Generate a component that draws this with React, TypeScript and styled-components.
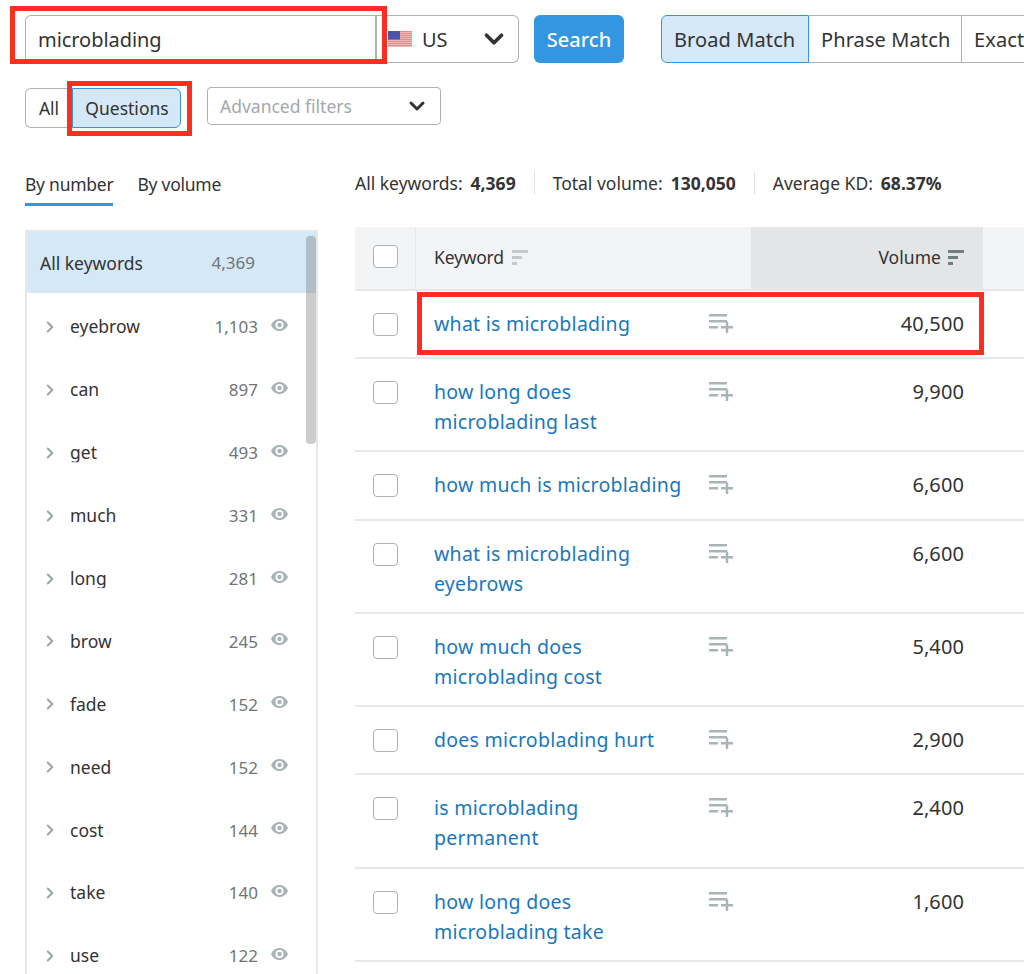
import React from 'react'
import styled, { createGlobalStyle } from 'styled-components'
import { ChevronDown, ChevronRight } from 'lucide-react'

const GlobalStyle = createGlobalStyle`
  html, body {
    margin: 0;
    padding: 0;
    background: #fff;
  }
  body {
    font-family: "Noto Sans", "Open Sans", sans-serif;
    color: #333;
  }
  * {
    box-sizing: border-box;
  }
`

const Page = styled.div`
  position: relative;
  width: 1024px;
  height: 974px;
  overflow: hidden;
  padding: 15px 0 0 25px;
`

const SearchRow = styled.div`
  display: flex;
  width: 1100px;
  height: 48px;
`

const QueryBox = styled.div`
  width: 352px;
  border: 1px solid #abb3b6;
  border-right: 2px solid #abb3b6;
  border-radius: 6px 0 0 6px;
  display: flex;
  align-items: center;
  padding-left: 12px;
  font-size: 20px;
  letter-spacing: -0.05px;
`

const CountrySelect = styled.div`
  width: 142px;
  border: 1px solid #abb3b6;
  border-left: 0;
  border-radius: 0 6px 6px 0;
  display: flex;
  align-items: center;
  padding-left: 11px;
  font-size: 20px;
  margin-right: 15px;

  svg.chevron {
    margin-left: auto;
    margin-right: 9px;
  }
`

const CountryName = styled.span`
  margin-left: 10px;
`

const SearchButton = styled.div`
  width: 90px;
  background: #3296e0;
  color: #fff;
  border-radius: 6px;
  display: flex;
  align-items: center;
  justify-content: center;
  font-size: 20px;
  font-weight: 500;
  margin-right: 37px;
`

const MatchTab = styled.div<{ $active?: boolean; $w: number }>`
  width: ${({ $w }) => $w}px;
  display: flex;
  align-items: center;
  padding-left: 12px;
  font-size: 20px;
  white-space: nowrap;
  letter-spacing: 0.1px;
  background: ${({ $active }) => ($active ? '#d5e8f7' : '#fff')};
  border: 1px solid ${({ $active }) => ($active ? '#3296e0' : '#abb3b6')};
  border-left-width: ${({ $active }) => ($active ? '1px' : '0')};
  border-radius: ${({ $active }) => ($active ? '6px 0 0 6px' : '0')};
`

const FilterRow = styled.div`
  display: flex;
  align-items: flex-start;
  margin-top: 24px;
  height: 41px;
`

const AllToggle = styled.div`
  width: 47px;
  height: 40px;
  margin-top: 1px;
  border: 1px solid #abb3b6;
  border-right: 0;
  border-radius: 6px 0 0 6px;
  display: flex;
  align-items: center;
  justify-content: center;
  font-size: 17.5px;
`

const QuestionsToggle = styled.div`
  width: 109px;
  height: 40px;
  margin-top: 1px;
  margin-right: 26px;
  padding-left: 1px;
  background: #d5e8f7;
  border: 1px solid #3296e0;
  border-radius: 0 6px 6px 0;
  display: flex;
  align-items: center;
  justify-content: center;
  font-size: 17.5px;
`

const FiltersSelect = styled.div`
  width: 234px;
  height: 38px;
  border: 1px solid #abb3b6;
  border-radius: 4px;
  display: flex;
  align-items: center;
  justify-content: space-between;
  padding: 0 11px 0 12px;
  font-size: 17.5px;
  color: #a3a8ab;
`

const Content = styled.div`
  display: flex;
  margin-top: 41px;
`

const LeftColumn = styled.div`
  width: 293px;
  margin-right: 37px;
  flex-shrink: 0;
`

const RightColumn = styled.div`
  width: 700px;
  flex-shrink: 0;
`

const ViewTabs = styled.div`
  display: flex;
  gap: 24px;
  height: 39px;
`

const ViewTab = styled.div<{ $active?: boolean }>`
  height: 37px;
  font-size: 17.5px;
  line-height: 30px;
  letter-spacing: -0.25px;
  border-bottom: 3px solid ${({ $active }) => ($active ? '#3296e0' : 'transparent')};
`

const Sidebar = styled.div`
  position: relative;
  margin-top: 22px;
  height: 760px;
  border: 2px solid #e6e9ea;
  border-bottom: 0;
`

const ScrollThumb = styled.div`
  position: absolute;
  top: 4px;
  right: 0;
  width: 10px;
  height: 208px;
  border-radius: 4px;
  background: rgba(120, 120, 120, 0.38);
`

const AllRow = styled.div`
  display: flex;
  align-items: center;
  height: 61px;
  background: #d5e8f7;
  padding-left: 13px;
  font-size: 17.5px;
`

const AllCount = styled.span`
  margin-left: auto;
  margin-right: 61px;
  font-size: 17px;
  color: #6f7578;
`

const GroupList = styled.div`
  padding-top: 2.5px;
`

const GroupRow = styled.div`
  display: flex;
  align-items: center;
  height: 62.9px;
  padding-left: 14px;
  font-size: 17px;
`

/* the descenders are cut off in the source too */
const GroupName = styled.span`
  display: block;
  margin-left: 11px;
  font-size: 17.5px;
  line-height: 19px;
  clip-path: inset(0);
`

const GroupCount = styled.span`
  margin-left: auto;
  margin-right: 13px;
  color: #6f7578;
`

const EyeIcon = styled.svg`
  margin-right: 28px;
  margin-top: -4px;
`

const StatsBar = styled.div`
  display: flex;
  align-items: center;
  height: 23px;
  font-size: 17.5px;
  margin-top: 2px;
`

const Stat = styled.div<{ $first?: boolean }>`
  display: flex;
  gap: 8px;
  align-items: center;
  height: 23px;
  padding: 0 18px;
  padding-left: ${({ $first }) => ($first ? '0' : '18px')};
  border-left: ${({ $first }) => ($first ? '0' : '1px solid #dfe2e3')};

  b {
    font-weight: 700;
  }
`

const Table = styled.div`
  margin-top: 33px;
`

const HeadRow = styled.div`
  display: flex;
  height: 64px;
  background: #f3f4f5;
  border-bottom: 2px solid #e6e9ea;
`

const CheckCell = styled.div<{ $head?: boolean }>`
  width: 61px;
  flex-shrink: 0;
  padding: ${({ $head }) => ($head ? '18px' : '22px')} 0 0 18px;
  border-right: ${({ $head }) => ($head ? '1px solid #e6e9ea' : '0')};
`

const Checkbox = styled.div`
  width: 25px;
  height: 23px;
  background: #fff;
  border: 1px solid #abb3b6;
  border-radius: 4px;
`

const KeywordHead = styled.div`
  width: 335px;
  display: flex;
  align-items: center;
  gap: 7px;
  padding: 0 0 2px 18px;
  font-size: 17.5px;
  letter-spacing: -0.2px;
`

const VolumeHead = styled.div`
  width: 232px;
  display: flex;
  align-items: center;
  justify-content: flex-end;
  gap: 6px;
  padding: 0 18px 2px 0;
  background: #e3e5e7;
  font-size: 17.5px;
  letter-spacing: 0.05px;
`

const Row = styled.div`
  display: flex;
  min-height: 68.2px;
  padding-bottom: 13.3px;
  border-bottom: 2px solid #e6e9ea;
`

const KeywordCell = styled.div`
  width: 335px;
  flex-shrink: 0;
  display: flex;
  padding: 18px 0 0 18px;
`

const KeywordLink = styled.a`
  width: 248px;
  font-size: 19.5px;
  line-height: 30px;
  letter-spacing: 0.26px;
  color: #1a77bd;
`

const AddIcon = styled.svg`
  margin-left: 26px;
  margin-top: 4px;
  flex-shrink: 0;
`

const VolumeCell = styled.div`
  width: 232px;
  flex-shrink: 0;
  padding: 18px 19px 0 0;
  text-align: right;
  font-size: 20px;
  line-height: 30px;
  letter-spacing: 0.1px;
`

const Callout = styled.div<{ $x: number; $y: number; $w: number; $h: number }>`
  position: absolute;
  left: ${({ $x }) => $x}px;
  top: ${({ $y }) => $y}px;
  width: ${({ $w }) => $w}px;
  height: ${({ $h }) => $h}px;
  border: 5px solid #ff2d20;
  pointer-events: none;
`

const FlagIcon = () => (
  <svg width="24" height="16" viewBox="0 0 24 16">
    <rect width="24" height="16" fill="#f4f4f6" />
    {[0, 1, 2, 3, 4, 5, 6, 7].map((i) => (
      <rect key={i} y={i * 2 + 0.3} width="24" height="1.1" fill="#ee5a5f" />
    ))}
    <rect width="12" height="8.5" fill="#4a55a8" />
  </svg>
)

const SortIcon = ({ color }: { color: string }) => (
  <svg width="18" height="16" viewBox="0 0 18 16">
    <rect x="1" y="1" width="16" height="3" fill={color} />
    <rect x="1" y="7" width="10" height="3" fill={color} />
    <rect x="1" y="13" width="5" height="3" fill={color} />
  </svg>
)

const groups: [string, string][] = [
  ['eyebrow', '1,103'],
  ['can', '897'],
  ['get', '493'],
  ['much', '331'],
  ['long', '281'],
  ['brow', '245'],
  ['fade', '152'],
  ['need', '152'],
  ['cost', '144'],
  ['take', '140'],
  ['use', '122'],
]

const rows: [string, string][] = [
  ['what is microblading', '40,500'],
  ['how long does microblading last', '9,900'],
  ['how much is microblading', '6,600'],
  ['what is microblading eyebrows', '6,600'],
  ['how much does microblading cost', '5,400'],
  ['does microblading hurt', '2,900'],
  ['is microblading permanent', '2,400'],
  ['how long does microblading take', '1,600'],
]

export default function App() {
  return (
    <Page>
      <GlobalStyle />
      <SearchRow>
        <QueryBox>microblading</QueryBox>
        <CountrySelect>
          <FlagIcon />
          <CountryName>US</CountryName>
          <ChevronDown className="chevron" size={30} strokeWidth={3} color="#333" />
        </CountrySelect>
        <SearchButton>Search</SearchButton>
        <MatchTab $active $w={148}>Broad Match</MatchTab>
        <MatchTab $w={153}>Phrase Match</MatchTab>
        <MatchTab $w={153}>Exact Match</MatchTab>
      </SearchRow>
      <FilterRow>
        <AllToggle>All</AllToggle>
        <QuestionsToggle>Questions</QuestionsToggle>
        <FiltersSelect>
          Advanced filters
          <ChevronDown size={24} strokeWidth={3} color="#333" />
        </FiltersSelect>
      </FilterRow>
      <Content>
        <LeftColumn>
          <ViewTabs>
            <ViewTab $active>By number</ViewTab>
            <ViewTab>By volume</ViewTab>
          </ViewTabs>
          <Sidebar>
            <ScrollThumb />
            <AllRow>
              All keywords
              <AllCount>4,369</AllCount>
            </AllRow>
            <GroupList>
              {groups.map(([name, count]) => (
                <GroupRow key={name}>
                  <ChevronRight size={18} strokeWidth={2.5} color="#9aa3a6" />
                  <GroupName>{name}</GroupName>
                  <GroupCount>{count}</GroupCount>
                  <EyeIcon width="17" height="12" viewBox="0 0 17 12">
                    <path
                      d="M8.5 0C4.6 0 1.6 2.4 0 6c1.6 3.6 4.6 6 8.5 6s6.900-2.400 8.500-6C15.400 2.400 12.400 0 8.500 0zm0 10a4 4 0 1 1 0-8 4 4 0 0 1 0 8zm0-6.200a2.200 2.200 0 1 0 0 4.400 2.200 2.200 0 0 0 0-4.400z"
                      fill="#aab3b6"
                      fillRule="evenodd"
                    />
                  </EyeIcon>
                </GroupRow>
              ))}
            </GroupList>
          </Sidebar>
        </LeftColumn>
        <RightColumn>
          <StatsBar>
            <Stat $first>All keywords: <b>4,369</b></Stat>
            <Stat>Total volume: <b>130,050</b></Stat>
            <Stat>Average KD: <b>68.37%</b></Stat>
          </StatsBar>
          <Table>
            <HeadRow>
              <CheckCell $head><Checkbox /></CheckCell>
              <KeywordHead>Keyword <SortIcon color="#c3c8ca" /></KeywordHead>
              <VolumeHead>Volume <SortIcon color="#6f7d82" /></VolumeHead>
            </HeadRow>
            {rows.map(([keyword, volume]) => (
              <Row key={keyword}>
                <CheckCell><Checkbox /></CheckCell>
                <KeywordCell>
                  <KeywordLink>{keyword}</KeywordLink>
                  <AddIcon width="26" height="20" viewBox="0 0 26 20">
                    <g fill="#aab3b6">
                      <rect x="1" y="1" width="18" height="2.500" />
                      <rect x="1" y="7" width="18" height="2.500" />
                      <rect x="1" y="13" width="9" height="2.500" />
                      <rect x="13" y="13" width="12" height="2.500" />
                      <rect x="17.750" y="8.500" width="2.500" height="11.500" />
                    </g>
                  </AddIcon>
                </KeywordCell>
                <VolumeCell>{volume}</VolumeCell>
              </Row>
            ))}
          </Table>
        </RightColumn>
      </Content>
      <Callout $x={10} $y={6} $w={377} $h={58} />
      <Callout $x={67} $y={81} $w={125} $h={55} />
      <Callout $x={417} $y={292} $w={567} $h={63} />
    </Page>
  )
}
